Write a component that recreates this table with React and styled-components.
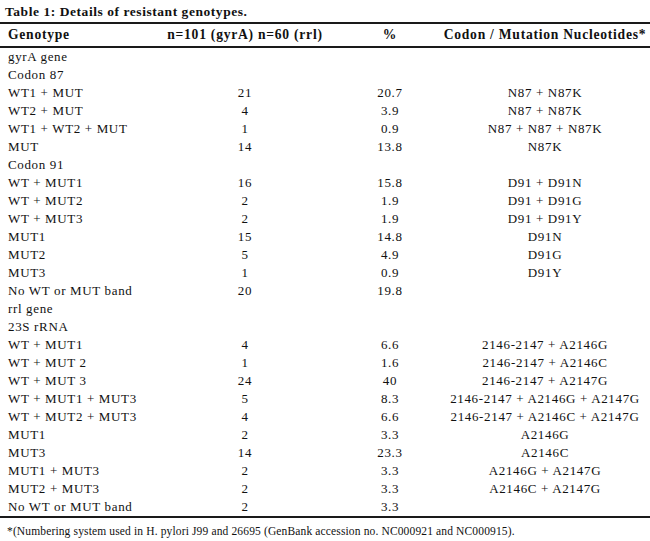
import React from 'react';
import styled, { createGlobalStyle } from 'styled-components';

const GlobalStyle = createGlobalStyle`
  html, body {
    margin: 0;
    padding: 0;
    background: #fff;
  }
  body {
    width: 650px;
    font-family: "Liberation Serif", "Times New Roman", serif;
    color: #111;
  }
`;

const Wrapper = styled.div`
  width: 650px;
  display: flex;
  flex-direction: column;
`;

const Caption = styled.div`
  height: 22px;
  padding: 3px 0 0 5px;
  box-sizing: border-box;
  font-weight: 700;
  font-size: 13.5px;
  letter-spacing: 0.55px;
  line-height: 18px;
`;

const Table = styled.div`
  border-top: 2px solid #1a1a1a;
  border-bottom: 2px solid #1a1a1a;
  display: flex;
  flex-direction: column;
`;

const Row = styled.div`
  display: grid;
  grid-template-columns: 150px 190px 100px 210px;
  height: ${p => (p.head ? '22px' : '18px')};
  align-items: center;
  font-size: ${p => (p.head ? '13.6px' : '13px')};
  letter-spacing: ${p => (p.head ? '0.75px' : '0.65px')};
  font-weight: ${p => (p.head ? 700 : 400)};
  border-bottom: ${p => (p.head ? '2px solid #1a1a1a' : 'none')};
  white-space: nowrap;
`;

const Cell = styled.div`
  padding-left: ${p => (p.first ? '8px' : '0')};
  text-align: ${p => (p.first ? 'left' : 'center')};
`;

const Footnote = styled.div`
  padding: 6px 0 0 7px;
  font-size: 11.5px;
  letter-spacing: 0.14px;
  line-height: 14px;
  white-space: nowrap;
`;

const rows = [
  ['gyrA gene'],
  ['Codon 87'],
  ['WT1 + MUT', '21', '20.7', 'N87 + N87K'],
  ['WT2 + MUT', '4', '3.9', 'N87 + N87K'],
  ['WT1 + WT2 + MUT', '1', '0.9', 'N87 + N87 + N87K'],
  ['MUT', '14', '13.8', 'N87K'],
  ['Codon 91'],
  ['WT + MUT1', '16', '15.8', 'D91 + D91N'],
  ['WT + MUT2', '2', '1.9', 'D91 + D91G'],
  ['WT + MUT3', '2', '1.9', 'D91 + D91Y'],
  ['MUT1', '15', '14.8', 'D91N'],
  ['MUT2', '5', '4.9', 'D91G'],
  ['MUT3', '1', '0.9', 'D91Y'],
  ['No WT or MUT band', '20', '19.8', ''],
  ['rrl gene'],
  ['23S rRNA'],
  ['WT + MUT1', '4', '6.6', '2146-2147 + A2146G'],
  ['WT + MUT 2', '1', '1.6', '2146-2147 + A2146C'],
  ['WT + MUT 3', '24', '40', '2146-2147 + A2147G'],
  ['WT + MUT1 + MUT3', '5', '8.3', '2146-2147 + A2146G + A2147G'],
  ['WT + MUT2 + MUT3', '4', '6.6', '2146-2147 + A2146C + A2147G'],
  ['MUT1', '2', '3.3', 'A2146G'],
  ['MUT3', '14', '23.3', 'A2146C'],
  ['MUT1 + MUT3', '2', '3.3', 'A2146G + A2147G'],
  ['MUT2 + MUT3', '2', '3.3', 'A2146C + A2147G'],
  ['No WT or MUT band', '2', '3.3', ''],
];

export default function App() {
  return (
    <>
      <GlobalStyle />
      <Wrapper>
        <Caption>Table 1: Details of resistant genotypes.</Caption>
        <Table>
          <Row head>
            <Cell first>Genotype</Cell>
            <Cell>n=101 (gyrA) n=60 (rrl)</Cell>
            <Cell>%</Cell>
            <Cell>Codon / Mutation Nucleotides*</Cell>
          </Row>
          {rows.map((r, i) => (
            <Row key={i}>
              <Cell first>{r[0]}</Cell>
              <Cell>{r[1]}</Cell>
              <Cell>{r[2]}</Cell>
              <Cell>{r[3]}</Cell>
            </Row>
          ))}
        </Table>
        <Footnote>
          *(Numbering system used in H. pylori J99 and 26695 (GenBank accession no. NC000921 and NC000915).
        </Footnote>
      </Wrapper>
    </>
  );
}
